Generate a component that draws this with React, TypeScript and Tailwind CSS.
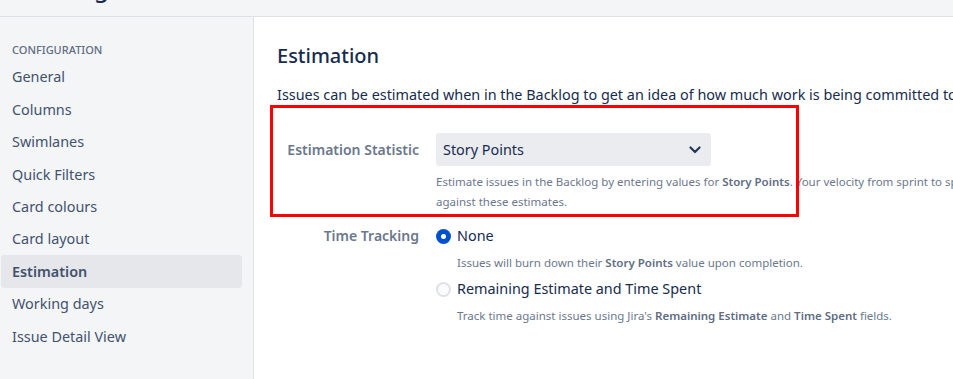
import { FC } from "react";

const navItems = [
    "General",
    "Columns",
    "Swimlanes",
    "Quick Filters",
    "Card colours",
    "Card layout",
    "Estimation",
    "Working days",
    "Issue Detail View",
];

const Sidebar: FC<{}> = ({}) => {
    return (
        <aside className="w-[254px] shrink-0 border-r border-[#dfe1e6] bg-[#f4f5f7] pl-[1px] pr-[11px] pt-[25px]">
            <div className="h-4 pl-[11px] text-[11px] leading-4 font-medium uppercase text-[#5e6c84]">
                Configuration
            </div>
            <nav className="mt-[3px] flex flex-col">
                {navItems.map((item) => (
                    <div
                        key={item}
                        className={
                            item === "Estimation"
                                ? "flex h-[32.4px] items-center rounded-[3px] bg-[#e6e7eb] px-[11px] text-[14.4px] font-semibold text-[#42526e]"
                                : "flex h-[32.4px] items-center px-[11px] text-[14.4px] text-[#42526e]"
                        }
                    >
                        {item}
                    </div>
                ))}
            </nav>
        </aside>
    );
};

const Radio: FC<{ checked?: boolean }> = ({ checked }) =>
    checked ? (
        <span className="flex h-[15px] w-[15px] items-center justify-center rounded-full bg-[#0052cc]">
            <span className="h-[5px] w-[5px] rounded-full bg-white" />
        </span>
    ) : (
        <span className="h-[15px] w-[15px] rounded-full border-2 border-[#dfe1e6] bg-[#fafbfc]" />
    );

export default function App() {
    return (
        <div className="flex h-[379px] w-[953px] flex-col overflow-hidden bg-white font-['Noto_Sans',sans-serif]">
            <header className="h-[17px] shrink-0 overflow-hidden border-b border-[#dfe1e6] bg-[#f4f5f7] pl-[27px]">
                <div className="-mt-[28px] text-2xl leading-8 font-medium text-[#172b4d]">Settings</div>
            </header>
            <div className="flex flex-1">
                <Sidebar />
                <main className="relative flex-1 overflow-hidden pl-[23px] pt-[27px] text-[#172b4d]">
                    <h1 className="h-6 text-xl leading-6 font-medium">Estimation</h1>
                    <p className="mt-[17px] whitespace-nowrap text-[14.4px] leading-5">
                        Issues can be estimated when in the Backlog to get an idea of how much work is being committed to each sprint.
                    </p>

                    <div className="mt-[28px] flex">
                        <div className="flex h-[33px] w-[142px] shrink-0 items-center justify-end text-sm font-semibold text-[#6b778c]">
                            Estimation Statistic
                        </div>
                        <div className="ml-[17px]">
                            <div className="flex h-[33px] w-[275px] items-center justify-between rounded-[3px] bg-[#ebecf0] pl-[7px] pr-[10px] text-[14.4px]">
                                <span>Story Points</span>
                                <svg width="12" height="8" viewBox="0 0 12 8" fill="none">
                                    <path d="M1.5 1.5 L6 6 L10.5 1.5" stroke="#253858" strokeWidth="2.2" strokeLinecap="round" strokeLinejoin="round" />
                                </svg>
                            </div>
                            <p className="mt-[6px] whitespace-nowrap text-[11.5px] leading-5 text-[#6b778c]">
                                Estimate issues in the Backlog by entering values for{" "}
                                <b className="font-semibold text-[#5e6c84]">Story Points</b>. Your velocity from sprint to sprint will be calculated by measuring the work you complete
                                <br />
                                against these estimates.
                            </p>
                        </div>
                    </div>

                    <div className="mt-3 flex">
                        <div className="flex h-6 w-[142px] shrink-0 items-center justify-end text-sm font-semibold text-[#6b778c]">
                            Time Tracking
                        </div>
                        <div className="ml-[17px] flex flex-col">
                            <label className="flex h-6 items-center gap-[6px] text-[14.4px]">
                                <Radio checked />
                                <span>None</span>
                            </label>
                            <p className="mt-[5px] pl-[21px] text-[11.5px] leading-5 text-[#6b778c]">
                                Issues will burn down their <b className="font-semibold text-[#5e6c84]">Story Points</b> value upon completion.
                            </p>
                            <label className="mt-1 flex h-6 items-center gap-[6px] text-[14.4px]">
                                <Radio />
                                <span>Remaining Estimate and Time Spent</span>
                            </label>
                            <p className="mt-[5px] pl-[21px] text-[11.5px] leading-5 text-[#6b778c]">
                                Track time against issues using Jira's{" "}
                                <b className="font-semibold text-[#5e6c84]">Remaining Estimate</b> and{" "}
                                <b className="font-semibold text-[#5e6c84]">Time Spent</b> fields.
                            </p>
                        </div>
                    </div>

                    <div className="pointer-events-none absolute left-[16px] top-[88px] h-[112px] w-[529px] border-[3px] border-[#ff0000]" />
                </main>
            </div>
        </div>
    );
}
